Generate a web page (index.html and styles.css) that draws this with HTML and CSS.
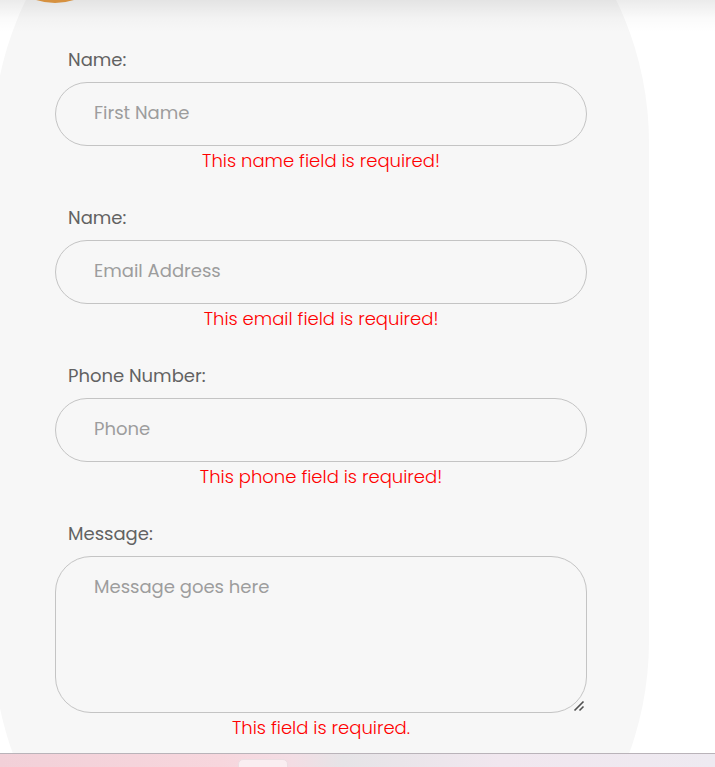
FILE: index.html
```html
<!DOCTYPE html>
<html lang="en">
<head>
<meta charset="utf-8">
<meta name="viewport" content="width=device-width, initial-scale=1">
<title>Contact form</title>
<link rel="stylesheet" href="styles.css">
</head>
<body>
<main class="page">
  <form class="card" novalidate>
    <div class="field">
      <label class="label" for="name">Name:</label>
      <input class="control" id="name" type="text" placeholder="First Name" aria-describedby="name-error">
      <p class="error" id="name-error">This name field is required!</p>
    </div>
    <div class="field">
      <label class="label" for="email">Name:</label>
      <input class="control" id="email" type="email" placeholder="Email Address" aria-describedby="email-error">
      <p class="error" id="email-error">This email field is required!</p>
    </div>
    <div class="field">
      <label class="label" for="phone">Phone Number:</label>
      <input class="control" id="phone" type="tel" placeholder="Phone" aria-describedby="phone-error">
      <p class="error" id="phone-error">This phone field is required!</p>
    </div>
    <div class="field">
      <label class="label" for="message">Message:</label>
      <textarea class="control control-area" id="message" placeholder="Message goes here" aria-describedby="message-error"></textarea>
      <p class="error" id="message-error">This field is required.</p>
    </div>
  </form>
  <div class="top-shadow"></div>
  <div class="badge"></div>
</main>
<footer class="taskbar"><div class="task"></div></footer>
</body>
</html>
```
FILE: styles.css
```css
* {
  box-sizing: border-box;
}

body {
  margin: 0;
  height: 100vh;
  display: grid;
  grid-template-rows: minmax(0, 1fr) 14px;
  background: #fff;
  font-family: Poppins, Inter, sans-serif;
  font-size: 18px;
  line-height: 30px;
}

.page {
  position: relative;
  overflow: hidden;
}

/* Tall pill that runs past the top and bottom of the view */
.card {
  display: flex;
  flex-direction: column;
  gap: 27px;
  margin: -185px 66px 0 -7px;
  padding: 230px 62px 226px;
  border-radius: 328px;
  background: #f7f7f7;
}

.field {
  display: flex;
  flex-direction: column;
}

.label {
  margin: 0 13px 7px;
  color: #626262;
}

.control {
  width: 100%;
  height: 64px;
  margin: 0;
  padding: 0 38px 4px;
  border: 1px solid #c4c4c4;
  border-radius: 36px;
  outline: 0;
  background: transparent;
  color: #626262;
  font: inherit;
}

.control::placeholder {
  color: #9d9d9d;
  opacity: 1;
}

.control-area {
  display: block;
  height: 157px;
  padding: 15px 38px;
  resize: vertical;
}

.control-area::-webkit-resizer {
  background: url("data:image/svg+xml,%3Csvg xmlns='http://www.w3.org/2000/svg' width='15' height='15'%3E%3Cpath d='M3.5 13.5L12.5 4.500M8.500 13.500L12.500 9.500' fill='none' stroke='%23505050' stroke-width='1.6'/%3E%3C/svg%3E") no-repeat;
}

.error {
  margin: 0;
  color: #f00;
  font-weight: 300;
  text-align: center;
}

.badge {
  position: absolute;
  top: -119px;
  left: -6px;
  width: 122px;
  height: 122px;
  border-radius: 50%;
  background: #d69140;
}

.top-shadow {
  position: absolute;
  top: 0;
  left: 0;
  right: 0;
  height: 32px;
  background: linear-gradient(rgba(0, 0, 0, 0.08), rgba(0, 0, 0, 0.02) 56%, transparent);
  pointer-events: none;
}

.taskbar {
  display: flex;
  padding: 5px 0 0 33.3%;
  border-top: 1px solid #b9b3b9;
  background: linear-gradient(90deg, #f2d0d8, #f7d6dd 31%, #f3dde4 41%, #e6e4e7 48%, #f1e7ef 70%, #eeeaf1);
  overflow: hidden;
}

.task {
  width: 50px;
  height: 20px;
  border: 1px solid #ecdde2;
  border-radius: 5px;
  background: #faeef1;
}
```
